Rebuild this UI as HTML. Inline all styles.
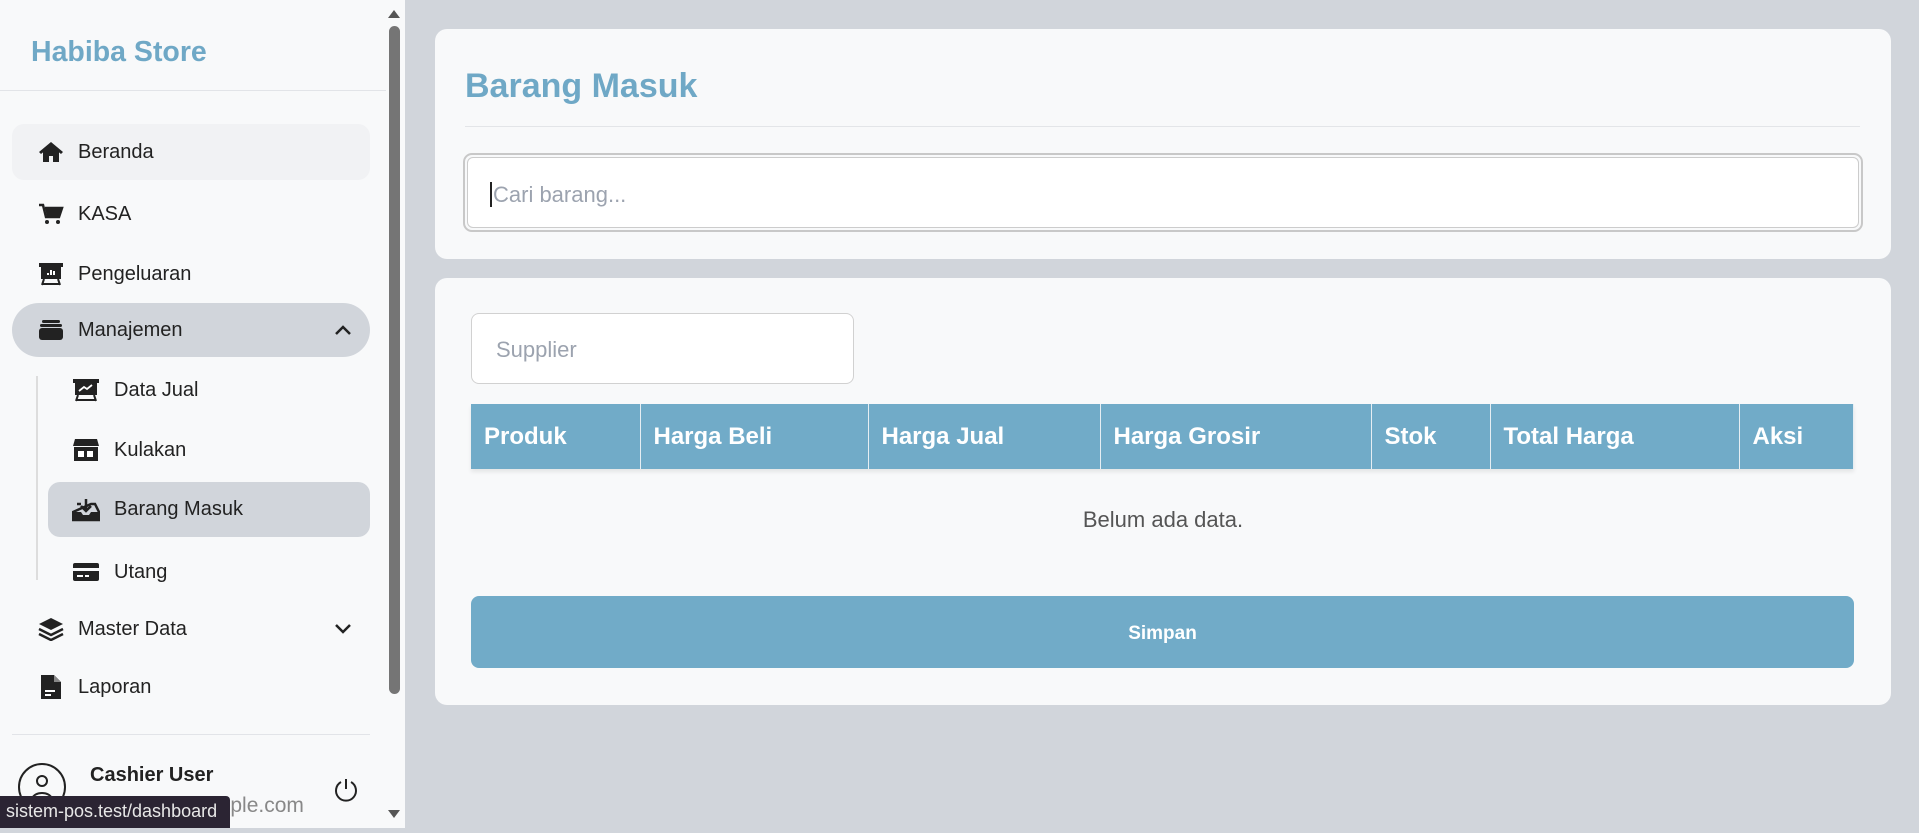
<!DOCTYPE html>
<html><head><meta charset="utf-8"><style>
*{box-sizing:border-box;margin:0;padding:0}
body{width:1919px;height:828px;overflow:hidden;background:#d1d5db;font-family:"Liberation Sans",sans-serif;position:relative}
.sb{position:absolute;left:0;top:0;width:405px;height:828px;background:#f8f9fa}
.brand{position:absolute;left:31px;top:36px;font-size:28.5px;font-weight:bold;color:#6fa8c6}
.hr{position:absolute;height:1px;background:#e2e4e8}
.it{position:absolute;left:12px;width:358px;height:56px;border-radius:12px;display:flex;align-items:center;font-size:20px;color:#222}
.it svg{position:absolute;left:26px}
.it span{position:absolute;left:66px}
.sub svg{left:24px}.sub span{left:66px}
.scroll{position:absolute;left:386px;top:0;width:16px;height:828px}
.card{position:absolute;left:435px;width:1456px;background:#f8f9fa;border-radius:12px}
th{background:#71abc8;color:#fff;text-align:left;font-size:24px;font-weight:bold;padding:0 13px;height:65px;border-right:1px solid #e6eef3}
</style></head><body>
<div class="sb">
<div class="brand">Habiba Store</div>
<div class="hr" style="left:0;top:90px;width:386px"></div>
<div class="it" style="top:124px;background:#f1f2f4"><svg width="26" height="24" viewBox="0 0 26 24"><path d="M13 2L1 12l2 2 2-1.6V22h6v-6h4v6h6V12.4L23 14l2-2z" fill="#222"/></svg><span>Beranda</span></div>
<div class="it" style="top:186px"><svg width="26" height="24" viewBox="0 0 26 24"><path d="M1 3h4l3 12h13l3-9H7" fill="none" stroke="#222" stroke-width="2.5"/><path d="M7 6h17l-3 9H9z" fill="#222"/><circle cx="9" cy="20" r="2" fill="#222"/><circle cx="20" cy="20" r="2" fill="#222"/></svg><span>KASA</span></div>
<div class="it" style="top:246px"><svg width="26" height="24" viewBox="0 0 26 24"><rect x="1" y="1" width="24" height="4" fill="#222"/><rect x="3" y="4" width="20" height="13" fill="#222"/><path d="M6 17l-2 6M20 17l2 6M5 22h16" stroke="#222" stroke-width="2"/><path d="M10 13v-2M13 13V8M16 13v-4" stroke="#fff" stroke-width="2"/></svg><span>Pengeluaran</span></div>
<div class="it" style="top:303px;height:54px;background:#d1d5db;border-radius:27px"><svg width="26" height="24" viewBox="0 0 26 24"><rect x="4" y="2" width="18" height="3" rx="1.5" fill="#222"/><rect x="2" y="6" width="22" height="3" rx="1.5" fill="#222"/><rect x="1" y="10" width="24" height="12" rx="3" fill="#222"/></svg><span>Manajemen</span><svg style="left:322px" width="18" height="12" viewBox="0 0 18 12"><path d="M2 10l7-7 7 7" fill="none" stroke="#222" stroke-width="2.5"/></svg></div>
<div style="position:absolute;left:36px;top:376px;width:2px;height:204px;background:#ddd"></div>
<div class="it sub" style="top:362px;left:48px;width:322px"><svg width="28" height="24" viewBox="0 0 28 24"><rect x="1" y="1" width="26" height="4" fill="#222"/><rect x="3" y="4" width="22" height="13" fill="#222"/><path d="M6 17l-2 6M22 17l2 6M5 22h18" stroke="#222" stroke-width="2"/><path d="M7 13l5-4 3 2 5-4" stroke="#fff" stroke-width="1.8" fill="none"/></svg><span style="left:66px">Data Jual</span></div>
<div class="it sub" style="top:422px;left:48px;width:322px"><svg width="28" height="24" viewBox="0 0 28 24"><path d="M3 1h22l2 7H1z" fill="#222"/><rect x="2" y="9" width="24" height="14" fill="#222"/><rect x="6" y="13" width="6" height="6" fill="#fff"/><rect x="15" y="13" width="6" height="6" fill="#fff"/></svg><span>Kulakan</span></div>
<div class="it sub" style="top:482px;left:48px;width:322px;height:55px;background:#d1d5db"><svg width="28" height="24" viewBox="0 0 28 24"><path d="M5 6h4M19 6h4L27 14v8H1v-8z" fill="none" stroke="#222" stroke-width="2.5"/><path d="M1 14h8l2 3h6l2-3h8v8H1z" fill="#222"/><path d="M14 1v11M9 8l5 5 5-5" fill="none" stroke="#222" stroke-width="2.5"/></svg><span>Barang Masuk</span></div>
<div class="it sub" style="top:544px;left:48px;width:322px"><svg width="28" height="24" viewBox="0 0 28 24"><rect x="1" y="3" width="26" height="18" rx="2" fill="#222"/><rect x="1" y="8" width="26" height="3" fill="#f8f9fa"/><path d="M5 16h6M13 16h4" stroke="#fff" stroke-width="2"/></svg><span>Utang</span></div>
<div class="it" style="top:601px"><svg width="26" height="24" viewBox="0 0 26 24"><path d="M13 1L1 7l12 6 12-6z" fill="#222"/><path d="M1 12l12 6 12-6M1 17l12 6 12-6" fill="none" stroke="#222" stroke-width="2.5"/></svg><span>Master Data</span><svg style="left:322px" width="18" height="12" viewBox="0 0 18 12"><path d="M2 2l7 7 7-7" fill="none" stroke="#222" stroke-width="2.5"/></svg></div>
<div class="it" style="top:659px"><svg width="26" height="26" viewBox="0 0 26 26"><path d="M3 1h13l7 7v17H3z" fill="#222"/><path d="M16 1v7h7" fill="#888"/><path d="M7 17h10M7 21h6" stroke="#fff" stroke-width="2"/></svg><span>Laporan</span></div>
<div class="hr" style="left:12px;top:734px;width:358px"></div>
<div style="position:absolute;left:18px;top:763px;width:48px;height:48px;border:2px solid #222;border-radius:50%"><svg width="44" height="44" viewBox="0 0 44 44"><circle cx="22" cy="16" r="5" fill="none" stroke="#222" stroke-width="2"/><path d="M12 34c2-8 18-8 20 0" fill="none" stroke="#222" stroke-width="2"/></svg></div>
<div style="position:absolute;left:90px;top:764px;font-size:20px;font-weight:bold;color:#222">Cashier User</div>
<div style="position:absolute;left:90px;top:794px;font-size:21px;color:#888">cashier@example.com</div>
<svg style="position:absolute;left:333px;top:777px" width="26" height="26" viewBox="0 0 26 26"><path d="M8 5a10 10 0 1 0 10 0" fill="none" stroke="#222" stroke-width="2"/><path d="M13 2v10" stroke="#222" stroke-width="2"/></svg>
<div style="position:absolute;left:0;top:796px;width:230px;height:32px;background:#2b2433;color:#e8e8e8;font-size:18px;padding:5px 0 0 6px;border-radius:0 4px 0 0">sistem-pos.test/dashboard</div>
</div>
<div class="scroll"><svg width="16" height="828"><path d="M2 18l6-8 6 8z" fill="#555"/><rect x="3" y="26" width="11" height="668" rx="5.5" fill="#757575"/><path d="M2 810l6 8 6-8z" fill="#555"/></svg></div>
<div class="card" style="top:29px;height:230px">
<div style="position:absolute;left:30px;top:38px;font-size:34px;font-weight:bold;color:#6fa8c6">Barang Masuk</div>
<div style="position:absolute;left:30px;top:97px;width:1395px;height:1px;background:#e3e5e8"></div>
<div style="position:absolute;left:28px;top:124px;width:1400px;height:79px;border:2px solid #c8c8c8;border-radius:9px;padding:2px"><div style="width:100%;height:100%;border:1px solid #ccc;border-radius:6px;background:#fff;font-size:22px;color:#9ca3af;padding:24px 0 0 22px"><span style="border-left:2px solid #222;padding-left:1px">Cari barang...</span></div></div>
</div>
<div class="card" style="top:278px;height:427px">
<div style="position:absolute;left:36px;top:35px;width:383px;height:71px;border:1px solid #d1d1d1;border-radius:8px;background:#fff;font-size:22px;color:#9ca3af;padding:23px 0 0 24px">Supplier</div>
<table style="position:absolute;left:36px;top:126px;width:1383px;border-collapse:collapse;box-shadow:0 3px 4px rgba(0,0,0,.08)"><tr>
<th style="width:169px">Produk</th><th style="width:228px">Harga Beli</th><th style="width:232px">Harga Jual</th><th style="width:271px">Harga Grosir</th><th style="width:119px">Stok</th><th style="width:249px">Total Harga</th><th>Aksi</th></tr></table>
<div style="position:absolute;left:0;width:100%;top:229px;text-align:center;font-size:22px;color:#555">Belum ada data.</div>
<div style="position:absolute;left:36px;top:318px;width:1383px;height:72px;background:#71abc8;border-radius:8px;color:#fff;font-weight:bold;font-size:19px;text-align:center;line-height:76px">Simpan</div>
</div>
</body></html>
